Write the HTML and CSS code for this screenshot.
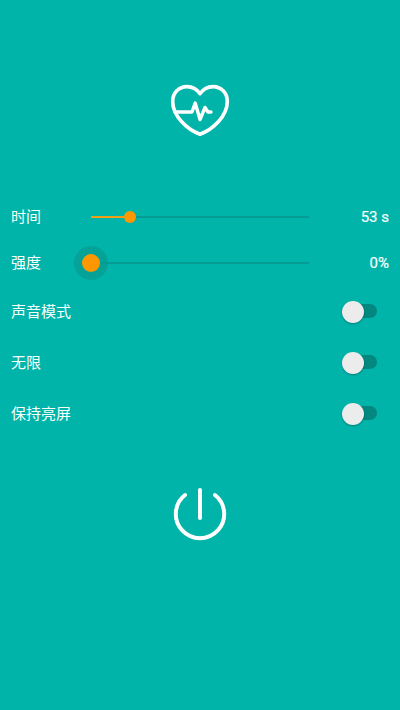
FILE: index.html
```html
<!DOCTYPE html>
<html lang="zh-CN">
<head>
<meta charset="utf-8">
<title>按摩</title>
<link rel="stylesheet" href="styles.css">
</head>
<body>
<header class="hero">
  <svg class="heart" viewBox="0 0 80 70" fill="none" stroke="#fff" stroke-linecap="round" stroke-linejoin="round">
    <path stroke-width="3.6" d="M40 18.7C36.8 14.2 32.3 11.6 27 11.6C18.8 11.6 12.7 18 12.7 26.5C12.7 41 27 54.5 40 59.2C53 54.5 67.3 41 67.3 26.5C67.3 18 61.2 11.6 53 11.6C47.7 11.6 43.2 14.2 40 18.7Z"/>
    <path stroke-width="3.4" d="M15 37H32L35.2 28L40 44.5L45 32.5L48 37H51"/>
  </svg>
</header>
<main class="settings">
  <div class="row slider-row">
    <span class="label">时间</span>
    <div class="slider"><div class="fill"></div><div class="dot"></div><div class="track"></div></div>
    <span class="value">53 s</span>
  </div>
  <div class="row slider-row">
    <span class="label">强度</span>
    <div class="slider"><div class="dot active"></div><div class="track"></div></div>
    <span class="value">0%</span>
  </div>
  <div class="row"><span class="label">声音模式</span><div class="switch"><div class="thumb"></div></div></div>
  <div class="row"><span class="label">无限</span><div class="switch"><div class="thumb"></div></div></div>
  <div class="row"><span class="label">保持亮屏</span><div class="switch"><div class="thumb"></div></div></div>
</main>
<footer class="footer">
  <svg class="power" viewBox="0 0 80 70" fill="none" stroke="#fff" stroke-width="4" stroke-linecap="round">
    <path d="M25 17A24.2 24.2 0 1 0 55 17M40 12V40"/>
  </svg>
</footer>
</body>
</html>
```

FILE: styles.css
```css
* {
  box-sizing: border-box;
}

body {
  margin: 0;
  height: 710px;
  overflow: hidden;
  background: #01b4aa;
  color: #f6fffe;
  font: 15px/20px Roboto, "Noto Sans CJK SC", sans-serif;
}

.hero {
  height: 194px;
  padding-top: 75px;
}

.heart,
.power {
  display: block;
  width: 80px;
  height: 70px;
  margin: 0 auto;
}

.row {
  display: flex;
  align-items: center;
  justify-content: space-between;
  height: 51px;
  padding: 0 11px;
}

.slider-row {
  height: 46px;
}

.slider-row .label {
  width: 80px;
}

.slider {
  display: flex;
  align-items: center;
  width: 218px;
}

.fill {
  width: 33px;
  height: 2px;
  background: #eda014;
}

.dot {
  flex: none;
  width: 12px;
  height: 12px;
  border-radius: 50%;
  background: #ff9800;
}

.dot.active {
  width: 18px;
  height: 18px;
  margin-left: -9px;
  box-shadow: 0 0 0 8px #06a298;
}

.track {
  flex: 1;
  height: 2px;
  background: #059c93;
}

.value {
  flex: 1;
  text-align: right;
  -webkit-text-stroke: 0.2px;
}

.switch {
  display: flex;
  align-items: center;
  width: 31px;
  height: 14px;
  margin: 0 12px 1px 0;
  border-radius: 7px;
  background: #03877f;
}

.thumb {
  flex: none;
  width: 22px;
  height: 22px;
  margin: 1px 0 0 -4px;
  border-radius: 50%;
  background: #ececec;
  box-shadow: 0 1px 2px rgba(0, 0, 0, 0.3);
}

.footer {
  padding-top: 39px;
}
```
